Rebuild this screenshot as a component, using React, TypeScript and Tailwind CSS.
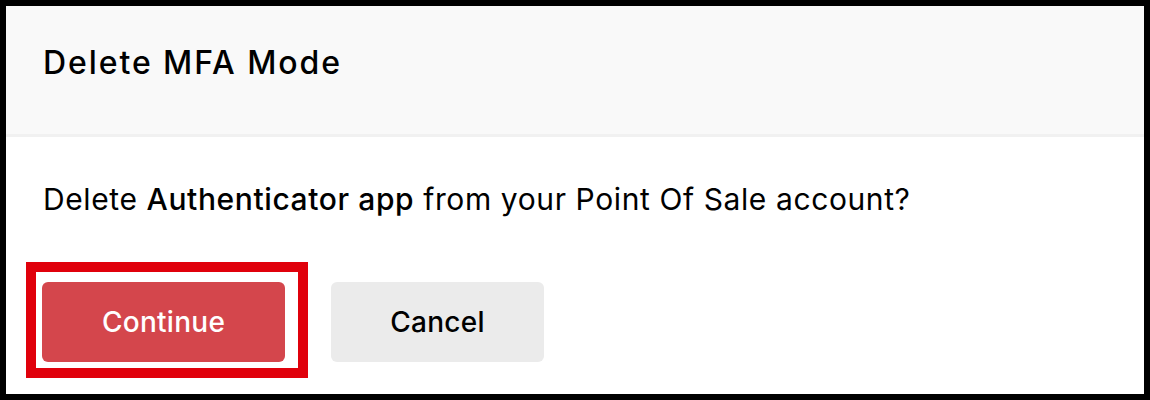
export default function App() {
  return (
    <div
      className="box-border flex h-[400px] w-[1150px] flex-col border-[6px] border-black bg-white text-black"
      style={{ fontFamily: "Inter, 'Noto Sans', sans-serif" }}
    >
      {/* Dialog header */}
      <div className="h-[131px] shrink-0 border-b-[3px] border-[#f1f1f1] bg-[#f9f9f9] px-[37px] pt-[38px]">
        <h1 className="text-[32px] font-medium leading-[38px] tracking-[0.06em]">Delete MFA Mode</h1>
      </div>

      {/* Dialog body */}
      <div className="px-[20px]">
        <p className="mt-[44px] pl-[17px] text-[30px] leading-[36px] tracking-[0.02em]">
          Delete <span className="font-medium">Authenticator app</span> from your Point Of Sale account?
        </p>

        <div className="mt-[45px] flex items-start gap-[23px]">
          {/* Highlight box around primary action */}
          <div className="border-[10px] border-[#e0000b] pb-[6px] pl-[6px] pr-[13px] pt-[10px]">
            <button className="flex h-[80px] w-[243px] items-center justify-center rounded-[6px] bg-[#d4464c] text-[28px] font-medium tracking-[0.01em] text-white">
              Continue
            </button>
          </div>
          <button className="mt-[20px] flex h-[80px] w-[213px] items-center justify-center rounded-[6px] bg-[#ebebeb] text-[28px] font-medium tracking-[0.01em] text-black">
            Cancel
          </button>
        </div>
      </div>
    </div>
  );
}
